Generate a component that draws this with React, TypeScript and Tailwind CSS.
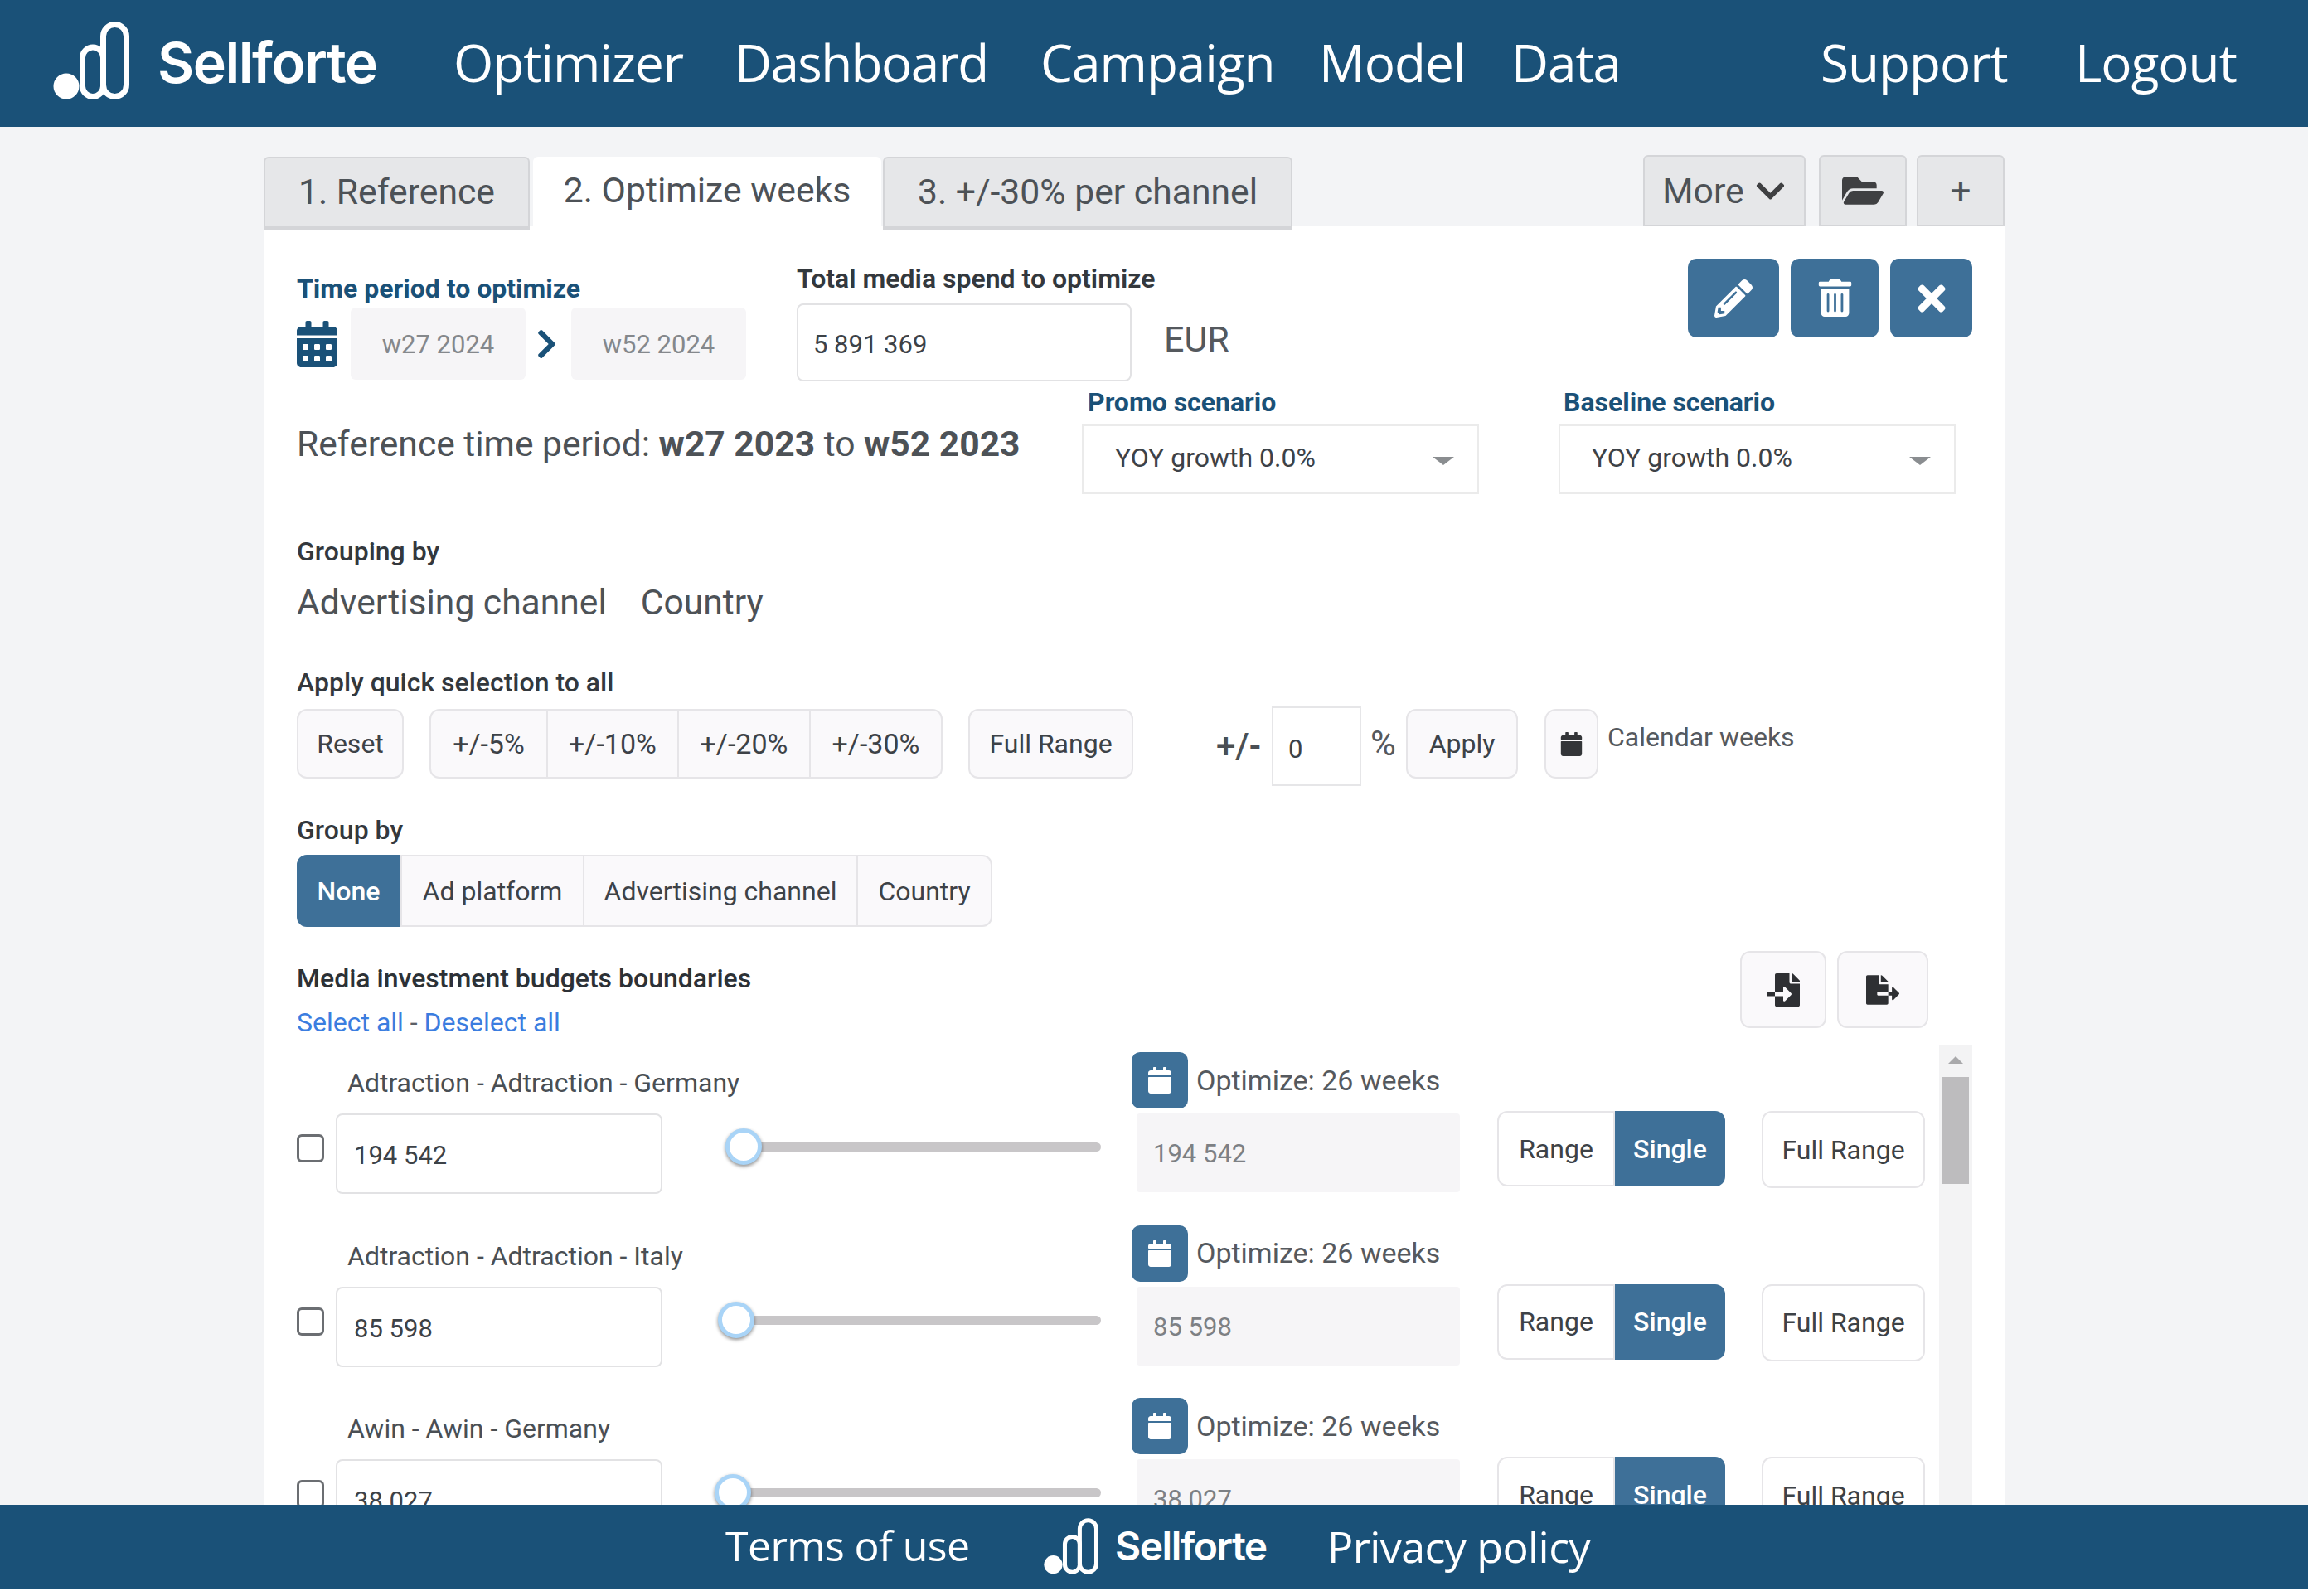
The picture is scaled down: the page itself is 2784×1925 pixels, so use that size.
import type { ReactNode } from 'react';
import {
  FaCalendar,
  FaCalendarAlt,
  FaChevronDown,
  FaChevronRight,
  FaFileExport,
  FaFileImport,
  FaFolderOpen,
  FaPencilAlt,
  FaTimes,
  FaTrashAlt,
} from 'react-icons/fa';

function Logo({ className }: { className: string }) {
  return (
    <svg viewBox="0 0 92 94" className={className} fill="none" stroke="white" strokeWidth="7">
      <circle cx="16" cy="78" r="15.5" fill="white" stroke="none" />
      <rect x="35.5" y="31" width="25" height="59.5" rx="12.5" />
      <rect x="60.5" y="3.5" width="28" height="87" rx="14" />
    </svg>
  );
}

function Label({ children, className = '' }: { children: ReactNode; className?: string }) {
  return <div className={`h-[40px] leading-[40px] text-[32px] whitespace-nowrap ${className}`}>{children}</div>;
}

function LightButton({ children, className = '' }: { children: ReactNode; className?: string }) {
  return (
    <button className={`flex items-center justify-center bg-[#faf9fb] border-2 border-[#e6e5e8] text-[32px] text-[#3d4247] ${className}`}>
      {children}
    </button>
  );
}

function SelectBox({ value }: { value: string }) {
  return (
    <div className="flex items-center justify-between w-[479px] h-[84px] border-2 border-[#ebebeb] pl-[38px] pr-[28px] pb-[4px] text-[32px] text-[#3d4247]">
      <span>{value}</span>
      <span className="w-0 h-0 border-x-[13px] border-x-transparent border-t-[10px] border-t-[#8a8d90] mt-[8px]" />
    </div>
  );
}

const quickButtons = [
  { text: '+/-5%', cls: 'w-[143px] rounded-l-[12px]' },
  { text: '+/-10%', cls: 'w-[160px] -ml-[2px]' },
  { text: '+/-20%', cls: 'w-[161px] -ml-[2px]' },
  { text: '+/-30%', cls: 'w-[161px] -ml-[2px] rounded-r-[12px]' },
];

const budgetRows = [
  { label: 'Adtraction - Adtraction - Germany', value: '194 542', thumb: 'left-[76px]' },
  { label: 'Adtraction - Adtraction - Italy', value: '85 598', thumb: 'left-[67px]' },
  { label: 'Awin - Awin - Germany', value: '38 027', thumb: 'left-[63px]' },
];

function BudgetRow({ label, value, thumb }: { label: string; value: string; thumb: string }) {
  return (
    <div className="flex h-[208.5px] shrink-0">
      <div className="w-[441px] shrink-0">
        <div className="h-[83px] pl-[61px] pt-[25px] leading-[42px] whitespace-nowrap text-[32px] text-[#4a4f54]">{label}</div>
        <div className="flex items-start gap-[14px]">
          <input type="checkbox" readOnly className="appearance-none w-[33px] h-[34px] mt-[25px] border-[3px] border-[#6b6e72] rounded-[6px] bg-white" />
          <input
            readOnly
            value={value}
            className="w-[394px] h-[97px] border-2 border-[#e2e2e4] rounded-[8px] pl-[20px] pt-[4px] text-[31px] text-[#3d4247] font-['Roboto',sans-serif] outline-none"
          />
        </div>
      </div>
      <div className="relative w-[529px] shrink-0 pt-[118px]">
        <div className="ml-[98px] w-[431px] h-[11px] rounded-full bg-[#c8c6c8]" />
        <div className={`absolute top-[101px] w-[44px] h-[44px] rounded-full bg-white border-[5px] border-[#a9d4f7] shadow-[0_2px_4px_rgba(0,0,0,0.45)] ${thumb}`} />
      </div>
      <div className="ml-[37px] w-[396px] shrink-0">
        <div className="flex items-center mt-[9px] h-[68px]">
          <button className="flex items-center justify-center w-[68px] h-[68px] rounded-[10px] bg-[#3e7098] text-white text-[32px]">
            <FaCalendar />
          </button>
          <span className="ml-[10px] whitespace-nowrap text-[34px] text-[#55595e]">Optimize: 26 weeks</span>
        </div>
        <div className="ml-[6px] mt-[6px] w-[390px] h-[95px] flex items-center pl-[20px] pt-[4px] bg-[#f6f5f7] rounded-[4px] text-[31px] text-[#7d8084]">
          {value}
        </div>
      </div>
      <div className="flex ml-[45px] mt-[80px] h-[91px] w-[275px] shrink-0">
        <LightButton className="w-[142px] rounded-l-[12px] bg-white">Range</LightButton>
        <div className="flex items-center justify-center w-[133px] rounded-r-[12px] bg-[#3e7098] text-white text-[32px] font-medium">Single</div>
      </div>
      <LightButton className="ml-[44px] mt-[80px] w-[197px] h-[93px] rounded-[12px] bg-white shrink-0">Full Range</LightButton>
    </div>
  );
}

export default function App() {
  return (
    <div className="flex flex-col w-[2784px] h-[1925px] overflow-hidden bg-white font-['Roboto',sans-serif]">
      {/* Top bar */}
      <header className="flex items-center h-[153px] shrink-0 pb-[3px] bg-[#1a5178] text-white font-['Open_Sans',sans-serif] font-normal text-[62px] tracking-[-1px]">
        <Logo className="ml-[64px] -mt-[4px] w-[92px] h-[94px]" />
        <span className="ml-[34px] w-[357px] font-['Inter',sans-serif] font-semibold text-[68px] tracking-[-1.5px]">Sellforte</span>
        <span className="w-[339px]">Optimizer</span>
        <span className="w-[369px] tracking-[-1.6px]">Dashboard</span>
        <span className="w-[336px]">Campaign</span>
        <span className="w-[232px]">Model</span>
        <span className="w-[373px]">Data</span>
        <span className="w-[307px]">Support</span>
        <span>Logout</span>
      </header>

      <main className="flex-1 min-h-0 flex flex-col pl-[318px] pr-[366px] pt-[34px] bg-[#f3f4f6]">
        {/* Tabs */}
        <div className="flex items-end h-[86px] shrink-0 text-[42.7px] text-[#4d5257]">
          <div className="relative z-10 flex items-center justify-center w-[321px] h-[88px] -mb-[4px] pb-[2px] rounded-t-[6px] border-2 border-b-4 border-[#d4d5d8] bg-[#e6e7e9]">1. Reference</div>
          <div className="flex items-center justify-center w-[420px] h-[84px] ml-[4px] pb-[4px] rounded-t-[6px] bg-white">2. Optimize weeks</div>
          <div className="relative z-10 flex items-center justify-center w-[494px] h-[88px] -mb-[4px] ml-[2px] pb-[2px] rounded-t-[6px] border-2 border-b-4 border-[#d4d5d8] bg-[#e6e7e9]">3. +/-30% per channel</div>
          <div className="flex ml-auto h-[86px]">
            <div className="flex items-center justify-center gap-[12px] w-[196px] rounded-t-[6px] border-2 border-[#d4d5d8] bg-[#e6e7e9]">
              More <FaChevronDown className="text-[39px] text-[#3f4042]" />
            </div>
            <div className="flex items-center justify-center w-[106px] ml-[16px] rounded-t-[6px] border-2 border-[#d4d5d8] bg-[#e6e7e9] text-[#3f4042] text-[50px]">
              <FaFolderOpen />
            </div>
            <div className="flex items-center justify-center w-[106px] ml-[12px] rounded-t-[6px] border-2 border-[#d4d5d8] bg-[#e6e7e9] text-[44px]">+</div>
          </div>
        </div>

        <section className="flex-1 min-h-0 flex flex-col bg-white pl-[40px] pr-[39px]">
          {/* Period + spend */}
          <div className="flex h-[195px] shrink-0">
            <div className="w-[603px] shrink-0 pt-[55px]">
              <Label className="font-bold text-[#1a5178]">Time period to optimize</Label>
              <div className="flex items-center mt-[3px] h-[87px]">
                <FaCalendarAlt className="w-[49px] h-[56px] text-[#1a5178]" />
                <div className="flex items-center justify-center w-[211px] h-[87px] ml-[16px] pt-[4px] rounded-[6px] bg-[#f6f5f7] text-[31px] text-[#85888c]">w27 2024</div>
                <FaChevronRight className="w-[27px] h-[40px] ml-[12px] mr-[16px] text-[#1a5178]" />
                <div className="flex items-center justify-center w-[211px] h-[87px] pt-[4px] rounded-[6px] bg-[#f6f5f7] text-[31px] text-[#85888c]">w52 2024</div>
              </div>
            </div>
            <div className="w-[404px] shrink-0 pt-[44px]">
              <Label className="-mb-[9px] -mt-[1px] font-semibold text-[#33383d]">Total media spend to optimize</Label>
              <input
                readOnly
                value="5 891 369"
                className="w-[404px] h-[94px] mt-[19px] border-2 border-[#e2e2e4] rounded-[8px] pl-[18px] pt-[4px] text-[31px] text-[#3d4247] font-['Roboto',sans-serif] outline-none"
              />
            </div>
            <div className="ml-[39px] pt-[112px] text-[43px] leading-[48px] text-[#55595e]">EUR</div>
            <div className="flex ml-auto mt-[39px] h-[95px] gap-[14px]">
              <button className="flex items-center justify-center w-[110px] rounded-[10px] bg-[#3e7098] text-white text-[46px]"><FaPencilAlt /></button>
              <button className="flex items-center justify-center w-[106px] rounded-[10px] bg-[#3e7098] text-white text-[45px]"><FaTrashAlt /></button>
              <button className="flex items-center justify-center w-[99px] rounded-[10px] bg-[#3e7098] text-white text-[48px]"><FaTimes /></button>
            </div>
          </div>

          {/* Reference period + scenarios */}
          <div className="flex h-[134px] shrink-0">
            <div className="w-[947px] shrink-0 pt-[39px] text-[42.6px] leading-[56px] text-[#4d5257]">
              Reference time period: <b className="font-bold">w27 2023</b> to <b className="font-bold">w52 2023</b>
            </div>
            <div className="w-[479px] shrink-0">
              <div className="h-[44px] pl-[7px] leading-[34px] text-[32px] font-bold text-[#1a5178]">Promo scenario</div>
              <SelectBox value="YOY growth 0.0%" />
            </div>
            <div className="w-[479px] ml-[96px] shrink-0">
              <div className="h-[44px] pl-[6px] leading-[34px] text-[32px] font-bold text-[#1a5178]">Baseline scenario</div>
              <SelectBox value="YOY growth 0.0%" />
            </div>
          </div>

          <Label className="mt-[43px] shrink-0 font-medium text-[#33383d]">Grouping by</Label>
          <div className="flex gap-[41px] mt-[17px] h-[50px] shrink-0 items-center text-[42.6px] text-[#4d5257]">
            <span>Advertising channel</span>
            <span>Country</span>
          </div>

          <Label className="mt-[51px] shrink-0 font-medium text-[#33383d]">Apply quick selection to all</Label>
          <div className="flex mt-[9px] h-[96px] shrink-0">
            <LightButton className="w-[129px] h-[84px] mt-[3px] rounded-[12px]">Reset</LightButton>
            <div className="flex ml-[31px] h-[84px] mt-[3px]">
              {quickButtons.map((b) => (
                <LightButton key={b.text} className={b.cls}>
                  <span className="text-[34px]">{b.text}</span>
                </LightButton>
              ))}
            </div>
            <LightButton className="w-[199px] h-[84px] mt-[3px] ml-[31px] rounded-[12px]">Full Range</LightButton>
            <span className="ml-[100px] w-[67px] leading-[96px] text-[42px] font-medium text-[#4a4f54]">+/-</span>
            <input
              readOnly
              value="0"
              className="w-[108px] h-[96px] border-2 border-[#e6e6e8] pl-[18px] pt-[6px] text-[31px] text-[#3d4247] font-['Roboto',sans-serif] outline-none"
            />
            <span className="ml-[11px] w-[43px] leading-[90px] text-[42px] text-[#55595e]">%</span>
            <LightButton className="w-[135px] h-[84px] mt-[3px] rounded-[12px]">Apply</LightButton>
            <LightButton className="w-[65px] h-[84px] mt-[3px] ml-[32px] rounded-[14px]"><FaCalendar className="text-[29px] text-[#333538]" /></LightButton>
            <span className="ml-[11px] mt-[17px] leading-[40px] text-[32px] text-[#55595e]">Calendar weeks</span>
          </div>

          <Label className="mt-[33px] shrink-0 font-medium text-[#33383d]">Group by</Label>
          <div className="flex mt-[10px] h-[87px] w-[839px] shrink-0">
            <div className="flex items-center justify-center w-[125px] rounded-l-[12px] bg-[#3e7098] text-white text-[32px] font-medium">None</div>
            <LightButton className="w-[222px]">Ad platform</LightButton>
            <LightButton className="w-[332px] -ml-[2px]">Advertising channel</LightButton>
            <LightButton className="w-[164px] -ml-[2px] rounded-r-[12px]">Country</LightButton>
          </div>

          <div className="flex mt-[29px] h-[113px] shrink-0">
            <div className="pt-[13px]">
              <Label className="font-medium text-[#2c3136]">Media investment budgets boundaries</Label>
              <div className="mt-[13px] h-[40px] leading-[40px] text-[32px] text-[#5c6066]">
                <a className="text-[#3b7de0]">Select all</a> - <a className="text-[#3b7de0]">Deselect all</a>
              </div>
            </div>
            <div className="flex ml-auto mr-[53px] h-[93px] gap-[13px]">
              <LightButton className="w-[104px] rounded-[12px]"><FaFileImport className="text-[40px] text-[#2e3033]" /></LightButton>
              <LightButton className="w-[110px] rounded-[12px]"><FaFileExport className="text-[40px] text-[#2e3033]" /></LightButton>
            </div>
          </div>

          {/* Budget rows, cut off by the footer */}
          <div className="flex flex-1 min-h-0 overflow-hidden">
            <div className="flex flex-col w-[1981px] shrink-0">
              {budgetRows.map((r) => (
                <BudgetRow key={r.label} {...r} />
              ))}
            </div>
            <div className="flex flex-col items-center w-[40px] bg-[#f3f3f4]">
              <span className="mt-[14px] w-0 h-0 border-x-[9px] border-x-transparent border-b-[9px] border-b-[#a9a9ab]" />
              <div className="mt-[16px] w-[32px] h-[129px] bg-[#bdbcbe]" />
            </div>
          </div>
        </section>
      </main>

      {/* Footer */}
      <footer className="flex items-center h-[102px] mb-[8px] pb-[3px] shrink-0 bg-[#1a5178] text-white font-['Open_Sans',sans-serif] font-normal text-[50px] tracking-[-0.6px]">
        <span className="ml-[875px] w-[384px] whitespace-nowrap">Terms of use</span>
        <Logo className="w-[66px] h-[68px]" />
        <span className="ml-[20px] w-[256px] font-['Inter',sans-serif] font-semibold text-[48px] tracking-[-1.5px]">Sellforte</span>
        <span className="text-[52px]">Privacy policy</span>
      </footer>
    </div>
  );
}
